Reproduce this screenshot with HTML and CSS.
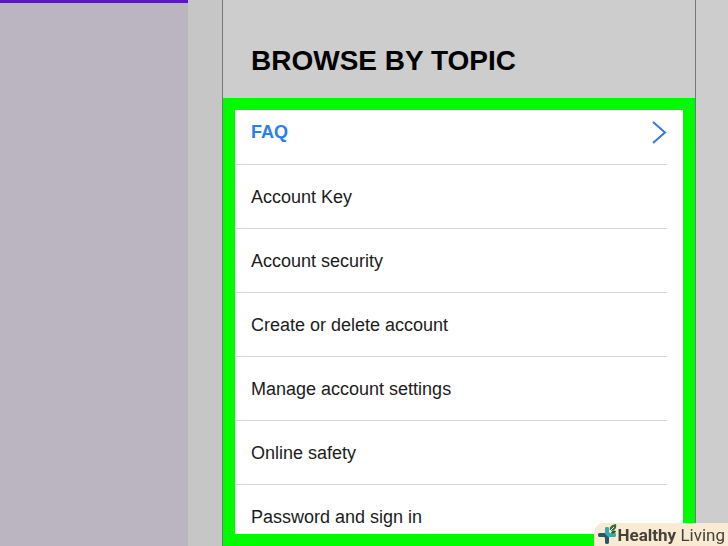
FILE: index.html
```html
<!DOCTYPE html>
<html lang="en">

<head>
    <meta charset="UTF-8">
    <meta name="viewport" content="width=device-width, initial-scale=1.0">
    <title>Browse by topic</title>
    <link rel="stylesheet" href="styles.css">
</head>

<body>
    <div class="page">
        <aside class="side"></aside>

        <main class="help">
            <h1 class="help-title">BROWSE BY TOPIC</h1>
            <nav class="topics">
                <a href="#faq" class="topic active">
                    FAQ
                    <svg class="chevron" width="16" height="24" viewBox="0 0 16 24" aria-hidden="true">
                        <path d="M2 2 L14 12.500 L2 23" fill="none" stroke="#3f73dc" stroke-width="2"/>
                    </svg>
                </a>
                <a href="#account-key" class="topic">Account Key</a>
                <a href="#account-security" class="topic">Account security</a>
                <a href="#create-delete" class="topic">Create or delete account</a>
                <a href="#settings" class="topic">Manage account settings</a>
                <a href="#safety" class="topic">Online safety</a>
                <a href="#password" class="topic">Password and sign in</a>
            </nav>
        </main>
    </div>

    <!-- site badge -->
    <div class="badge">
        <svg width="20" height="22" viewBox="0 0 20 22" aria-hidden="true">
            <path d="M9 5 V18" stroke="#2b9c9f" stroke-width="4" stroke-linecap="round"/>
            <path d="M2 11 H16" stroke="#38aaae" stroke-width="4" stroke-linecap="round"/>
            <path d="M2 11 H7 L9 13 V18" fill="none" stroke="#2b5663" stroke-width="4" stroke-linecap="round"/>
            <path d="M9 5 V9 L11 11 H16" fill="none" stroke="#38aaae" stroke-width="4" stroke-linecap="round"/>
            <path d="M12 7 C11 3 13 1 18 0 C19 4 17 7 12 7 Z" fill="#356b3d"/>
            <path d="M13 9 C14 6 16 6 18 7 C18 9 15 10 13 9 Z" fill="#2c5633"/>
            <path d="M12 7 L16 3" stroke="#f5e9d3" stroke-width="1"/>
        </svg>
        <span><b>Healthy</b> Living</span>
    </div>
</body>

</html>
```

FILE: styles.css
```css
* {
    box-sizing: border-box;
}

body {
    margin: 0;
    background-color: #cdcdcd;
    color: #1c1c1c;
    font-family: "Liberation Sans", Arial, sans-serif;
}

.page {
    display: grid;
    grid-template-columns: 188fr 474fr;
    column-gap: 34px;
    min-height: 100vh;
    padding-right: 32px;
    background: linear-gradient(to right, #c6c6c6 50%, #cdcdcd 50%);
}

.side {
    background-color: #bab5c0;
    border-top: 3px solid #5c18c0;
}

.help {
    display: flex;
    flex-direction: column;
    background-color: #cdcdcd;
    border-left: 1px solid #6f7975;
    border-right: 1px solid #77777b;
}

.help-title {
    margin: 0;
    padding: 45px 28px 21px;
    color: #000;
    font-size: 28px;
    line-height: 32px;
}

.topics {
    flex: 1;
    padding: 0 16px 0 1px;
    background-color: #fff;
    border: 12px solid #00fb00;
}

.topic {
    display: flex;
    align-items: center;
    justify-content: space-between;
    padding: 22px 0 21px 15px;
    border-bottom: 1px solid #d6d6d6;
    color: inherit;
    font-size: 18px;
    line-height: 20px;
    text-decoration: none;
}

.topic:first-child {
    padding-top: 12px;
    padding-bottom: 22px;
}

.topic:last-child {
    padding-bottom: 7px;
    border-bottom: none;
}

.topic.active {
    color: #2680f0;
    font-weight: bold;
}

.chevron {
    margin: -2px 0;
}

.badge {
    position: fixed;
    right: 0;
    bottom: 0;
    display: flex;
    align-items: center;
    height: 23px;
    padding: 0 3px 0 4px;
    background-color: #f8ead3;
    border-radius: 10px 0 0 0;
    color: #454039;
    font-family: Roboto, "Liberation Sans", sans-serif;
    font-size: 17px;
    line-height: 22px;
}
```
